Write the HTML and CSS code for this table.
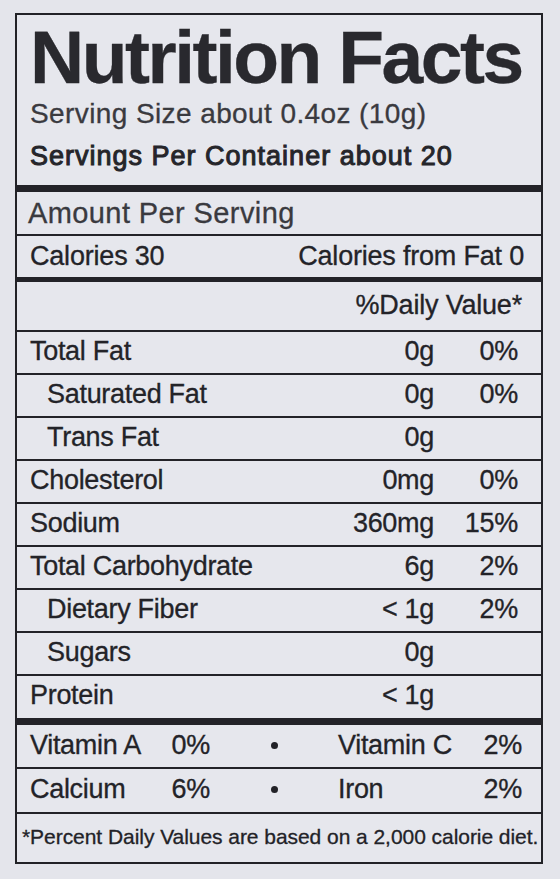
FILE: index.html
```html
<!DOCTYPE html>
<html lang="en">
<head>
<meta charset="utf-8">
<title>Nutrition Facts</title>
<link rel="stylesheet" href="styles.css">
</head>
<body>
<section class="label">
  <header class="head">
    <h1 class="title">Nutrition Facts</h1>
    <p class="serving">Serving Size about 0.4oz (10g)</p>
    <p class="servings">Servings Per Container about 20</p>
  </header>
  <div class="bar thick"></div>
  <div class="amount-row">Amount Per Serving</div>
  <div class="calories-row">
    <span>Calories 30</span>
    <span>Calories from Fat 0</span>
  </div>
  <div class="bar medium"></div>
  <div class="dv-row">%Daily Value*</div>
  <div class="nrow"><span class="name">Total Fat</span><span class="amt">0g</span><span class="pct">0%</span></div>
  <div class="nrow sub"><span class="name">Saturated Fat</span><span class="amt">0g</span><span class="pct">0%</span></div>
  <div class="nrow sub"><span class="name">Trans Fat</span><span class="amt">0g</span><span class="pct"></span></div>
  <div class="nrow"><span class="name">Cholesterol</span><span class="amt">0mg</span><span class="pct">0%</span></div>
  <div class="nrow"><span class="name">Sodium</span><span class="amt">360mg</span><span class="pct">15%</span></div>
  <div class="nrow"><span class="name">Total Carbohydrate</span><span class="amt">6g</span><span class="pct">2%</span></div>
  <div class="nrow sub"><span class="name">Dietary Fiber</span><span class="amt">&lt; 1g</span><span class="pct">2%</span></div>
  <div class="nrow sub"><span class="name">Sugars</span><span class="amt">0g</span><span class="pct"></span></div>
  <div class="nrow last"><span class="name">Protein</span><span class="amt">&lt; 1g</span><span class="pct"></span></div>
  <div class="bar thick"></div>
  <div class="vrow"><span>Vitamin A</span><span class="vp">0%</span><span class="dotcell"><span class="dot"></span></span><span>Vitamin C</span><span class="vp">2%</span></div>
  <div class="vrow"><span>Calcium</span><span class="vp">6%</span><span class="dotcell"><span class="dot"></span></span><span>Iron</span><span class="vp">2%</span></div>
  <div class="foot">*Percent Daily Values are based on a 2,000 calorie diet.</div>
</section>
</body>
</html>
```
FILE: styles.css
```css
* { box-sizing: border-box; }
html, body {
  margin: 0;
  padding: 0;
  background: #e4e5eb;
}
body {
  font-family: "Liberation Sans", Arial, sans-serif;
  color: #232328;
  padding: 13px 0 0 15px;
  height: 879px;
  overflow: hidden;
  -webkit-text-stroke: 0.3px currentColor;
}
.label {
  width: 528px;
  border: 2px solid #222227;
  background: #e6e7ed;
}
.head {
  padding: 5px 0 15px 13px;
}
.title {
  margin: 0;
  font-size: 75px;
  line-height: 74px;
  font-weight: 700;
  letter-spacing: -2.5px;
  color: #29292e;
  white-space: nowrap;
}
.serving {
  margin: 6px 0 0;
  font-size: 28px;
  line-height: 28px;
  letter-spacing: 0.4px;
  color: #3a3a3f;
}
.servings {
  margin: 15px 0 0;
  font-size: 27px;
  line-height: 27px;
  font-weight: 400;
  letter-spacing: 1px;
  -webkit-text-stroke: 1px currentColor;
  color: #25252a;
}
.bar { background: #232328; }
.bar.thick { height: 7px; }
.bar.medium { height: 5px; }
.amount-row {
  height: 44px;
  line-height: 42px;
  padding-left: 11px;
  font-size: 29px;
  letter-spacing: 0.4px;
  color: #3a3a3f;
  border-bottom: 2px solid #232328;
}
.calories-row {
  height: 41px;
  display: flex;
  align-items: center;
  justify-content: space-between;
  padding: 0 17px 0 13px;
  font-size: 27px;
  letter-spacing: -0.2px;
}
.dv-row {
  height: 50px;
  line-height: 47px;
  text-align: right;
  padding-right: 19px;
  font-size: 27px;
  letter-spacing: -0.2px;
  border-bottom: 2px solid #232328;
}
.nrow {
  height: 43px;
  display: grid;
  grid-template-columns: 1fr 110px 84px;
  align-items: center;
  padding: 0 23px 3px 13px;
  font-size: 27px;
  letter-spacing: -0.3px;
  border-bottom: 2px solid #232328;
}
.nrow.last {
  height: 42px;
  border-bottom: 0;
}
.nrow.sub .name { padding-left: 17px; }
.amt, .pct { text-align: right; }
.vrow {
  height: 44px;
  display: grid;
  grid-template-columns: 130px 50px 128px 130px 54px;
  align-items: center;
  padding: 0 0 2px 13px;
  font-size: 27px;
  letter-spacing: -0.3px;
  border-bottom: 2px solid #232328;
}
.vrow + .vrow { height: 45px; }
.vp { text-align: right; }
.dotcell {
  display: flex;
  justify-content: center;
}
.dot {
  width: 7px;
  height: 7px;
  border-radius: 50%;
  background: #222227;
}
.foot {
  height: 48px;
  line-height: 46px;
  padding-left: 5px;
  font-size: 21px;
  letter-spacing: -0.05px;
  white-space: nowrap;
  color: #222227;
}
```
